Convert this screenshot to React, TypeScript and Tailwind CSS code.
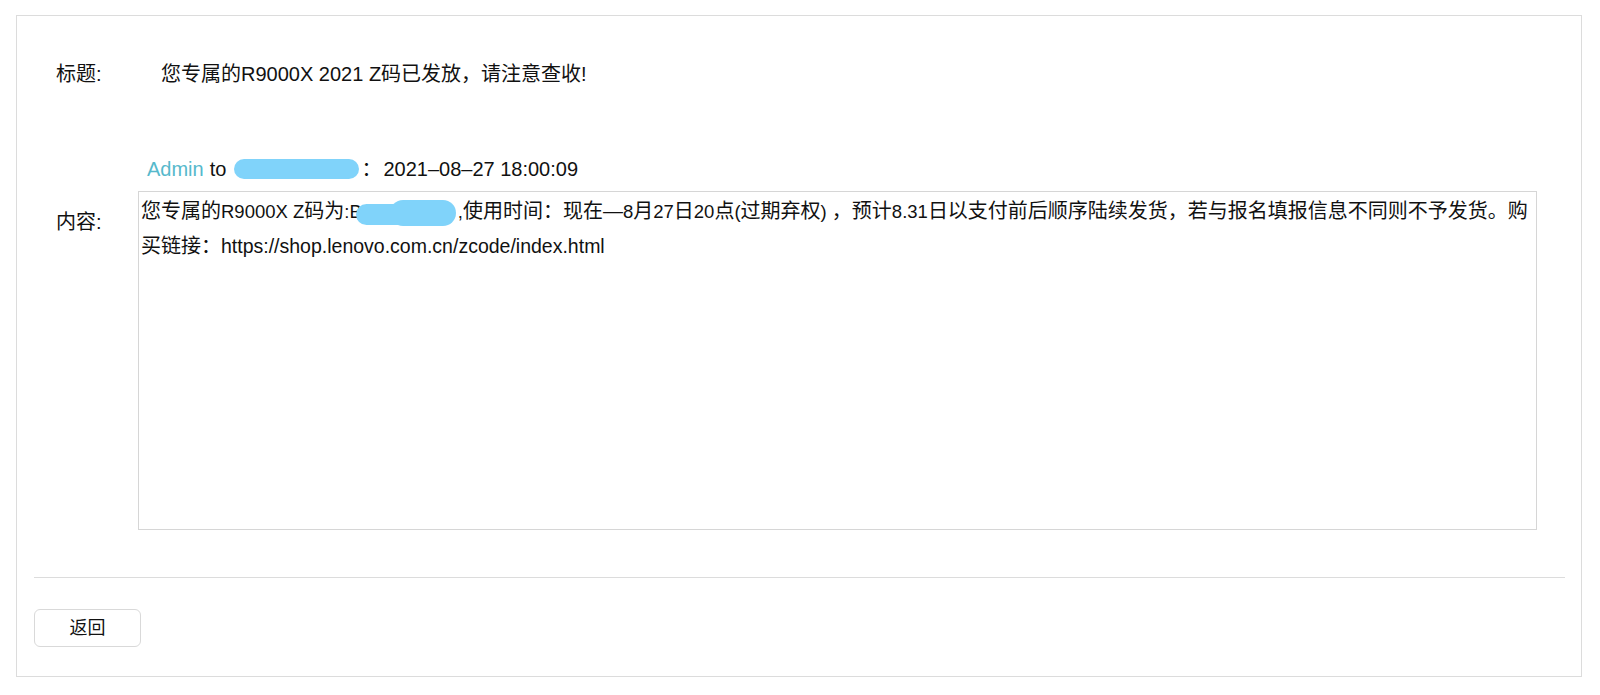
import React from "react";

const font = { fontFamily: '"Liberation Sans", "Noto Sans CJK SC", sans-serif' };

const LATIN = /^[\u0020-\u007E\u2013]+$/;

function Mixed({ text, latin }: { text: string; latin: string }) {
  const parts = text.split(/([\u0020-\u007E\u2013]+)/);
  return (
    <>
      {parts.map((p, i) =>
        p === "" ? null : LATIN.test(p) ? (
          <span key={i} className={latin}>
            {p}
          </span>
        ) : (
          <React.Fragment key={i}>{p}</React.Fragment>
        )
      )}
    </>
  );
}

export default function App() {
  return (
    <div className="w-[1600px] h-[695px] bg-white pt-[15px] pl-[16px] text-[#111]" style={font}>
      <div className="w-[1566px] h-[662px] border border-[#dcdcdc] flex flex-col">
        {/* Title row */}
        <div className="flex items-center mt-[46px] pl-[39px] text-[20px] leading-[24px]">
          <div className="w-[105px] shrink-0">标题:</div>
          <div>您专属的R9000X 2021 Z码已发放，请注意查收!</div>
        </div>

        {/* Sender row */}
        <div className="flex items-center mt-[71px] pl-[130px] text-[20px] leading-[24px]">
          <span className="text-[#56b9cc]">Admin</span>
          <span className="ml-[6px]">to</span>
          <span className="ml-[8px] inline-block w-[125px] h-[20px] rounded-full bg-[#80d3fa]" />
          <span className="ml-[2px]">：</span>
          <span className="ml-[2px]">2021–08–27 18:00:09</span>
        </div>

        {/* Content row */}
        <div className="flex mt-[10px] pl-[39px]">
          <div className="w-[82px] shrink-0 pt-[19px] text-[20px] leading-[24px]">内容:</div>
          <div className="w-[1399px] h-[339px] border border-[#d6d6d6] pt-[2px] pl-[2px] text-[20px] leading-[35px] overflow-hidden">
            <div className="whitespace-nowrap">
              <Mixed text="您专属的R9000X Z码为:B" latin="text-[18.5px]" />
              <span className="relative inline-block w-[96px] h-[20px] align-middle">
                <span className="absolute left-[-6px] top-[1px] w-[58px] h-[21px] rounded-full bg-[#80d3fa]" />
                <span className="absolute left-[28px] top-[-3px] w-[66px] h-[26px] rounded-full bg-[#80d3fa]" />
              </span>
              <Mixed
                text=",使用时间：现在—8月27日20点(过期弃权) ，预计8.31日以支付前后顺序陆续发货，若与报名填报信息不同则不予发货。购"
                latin="text-[18.5px]"
              />
            </div>
            <div className="whitespace-nowrap">
              <Mixed text="买链接：https://shop.lenovo.com.cn/zcode/index.html" latin="text-[19.5px]" />
            </div>
          </div>
        </div>

        {/* Divider */}
        <div className="mt-[47px] ml-[17px] mr-[16px] h-px bg-[#dcdcdc]" />

        {/* Button */}
        <div className="mt-[31px] ml-[17px]">
          <button
            className="w-[107px] h-[38px] rounded-[6px] border border-[#d9d9d9] bg-white text-[18px] text-[#111]"
            style={font}
          >
            返回
          </button>
        </div>
      </div>
    </div>
  );
}
